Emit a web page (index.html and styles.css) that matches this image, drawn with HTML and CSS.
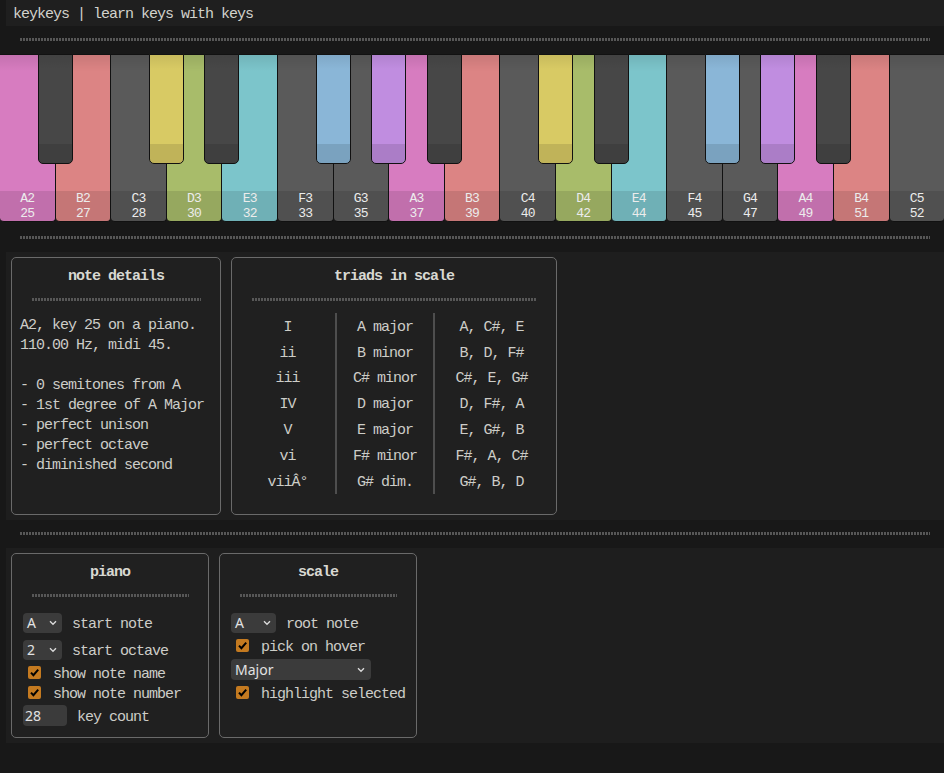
FILE: index.html
```html
<!DOCTYPE html>
<html lang="en">
<head>
<meta charset="utf-8">
<title>keykeys</title>
<link rel="stylesheet" href="styles.css">
</head>
<body>
<header class="titlebar">keykeys | learn keys with keys</header>
<div class="sep"><div class="dots"></div></div>

<div class="piano">
  <div class="wkey c-a"><div class="bkey c-dark"></div><div class="wlabel"><span>A2</span><span>25</span></div></div>
  <div class="wkey c-b"><div class="wlabel"><span>B2</span><span>27</span></div></div>
  <div class="wkey c-off"><div class="bkey c-cs"></div><div class="wlabel"><span>C3</span><span>28</span></div></div>
  <div class="wkey c-d"><div class="bkey c-dark"></div><div class="wlabel"><span>D3</span><span>30</span></div></div>
  <div class="wkey c-e"><div class="wlabel"><span>E3</span><span>32</span></div></div>
  <div class="wkey c-off"><div class="bkey c-fs"></div><div class="wlabel"><span>F3</span><span>33</span></div></div>
  <div class="wkey c-off"><div class="bkey c-gs"></div><div class="wlabel"><span>G3</span><span>35</span></div></div>
  <div class="wkey c-a"><div class="bkey c-dark"></div><div class="wlabel"><span>A3</span><span>37</span></div></div>
  <div class="wkey c-b"><div class="wlabel"><span>B3</span><span>39</span></div></div>
  <div class="wkey c-off"><div class="bkey c-cs"></div><div class="wlabel"><span>C4</span><span>40</span></div></div>
  <div class="wkey c-d"><div class="bkey c-dark"></div><div class="wlabel"><span>D4</span><span>42</span></div></div>
  <div class="wkey c-e"><div class="wlabel"><span>E4</span><span>44</span></div></div>
  <div class="wkey c-off"><div class="bkey c-fs"></div><div class="wlabel"><span>F4</span><span>45</span></div></div>
  <div class="wkey c-off"><div class="bkey c-gs"></div><div class="wlabel"><span>G4</span><span>47</span></div></div>
  <div class="wkey c-a"><div class="bkey c-dark"></div><div class="wlabel"><span>A4</span><span>49</span></div></div>
  <div class="wkey c-b"><div class="wlabel"><span>B4</span><span>51</span></div></div>
  <div class="wkey c-off"><div class="wlabel"><span>C5</span><span>52</span></div></div>
</div>

<div class="sep"><div class="dots"></div></div>

<section class="section">
  <div class="panel details">
    <div class="ptitle">note details</div>
    <div class="dots inner"></div>
    <div class="detail-text">A2, key 25 on a piano.<br>110.00 Hz, midi 45.<br><br>- 0 semitones from A<br>- 1st degree of A Major<br>- perfect unison<br>- perfect octave<br>- diminished second</div>
  </div>
  <div class="panel triads">
    <div class="ptitle">triads in scale</div>
    <div class="dots inner"></div>
    <table class="triad-table">
      <tr><td>I</td><td>A major</td><td>A, C#, E</td></tr>
      <tr><td>ii</td><td>B minor</td><td>B, D, F#</td></tr>
      <tr><td>iii</td><td>C# minor</td><td>C#, E, G#</td></tr>
      <tr><td>IV</td><td>D major</td><td>D, F#, A</td></tr>
      <tr><td>V</td><td>E major</td><td>E, G#, B</td></tr>
      <tr><td>vi</td><td>F# minor</td><td>F#, A, C#</td></tr>
      <tr><td>viiÂ°</td><td>G# dim.</td><td>G#, B, D</td></tr>
    </table>
  </div>
</section>

<div class="sep"><div class="dots"></div></div>

<section class="section">
  <div class="panel ctl">
    <div class="ptitle">piano</div>
    <div class="dots inner"></div>
    <div class="row tall">
      <span class="sel w-note">A<svg class="chev" width="8" height="6" viewBox="0 0 8 6"><polyline points="1,1.2 4,4.3 7,1.2" fill="none" stroke="#dcdcdc" stroke-width="1.3"/></svg></span>
      <span class="lbl">start note</span>
    </div>
    <div class="row tall gap3">
      <span class="sel w-note">2<svg class="chev" width="8" height="6" viewBox="0 0 8 6"><polyline points="1,1.2 4,4.3 7,1.2" fill="none" stroke="#dcdcdc" stroke-width="1.3"/></svg></span>
      <span class="lbl">start octave</span>
    </div>
    <div class="row">
      <span class="chk"><svg width="13" height="13" viewBox="0 0 13 13"><path d="M3 6.6 L5.4 9.2 L10.2 3.6" fill="none" stroke="#000" stroke-width="2"/></svg></span>
      <span class="lbl chk-lbl">show note name</span>
    </div>
    <div class="row nogap">
      <span class="chk"><svg width="13" height="13" viewBox="0 0 13 13"><path d="M3 6.6 L5.4 9.2 L10.2 3.6" fill="none" stroke="#000" stroke-width="2"/></svg></span>
      <span class="lbl chk-lbl">show note number</span>
    </div>
    <div class="row tall">
      <span class="num">28</span>
      <span class="lbl num-lbl">key count</span>
    </div>
  </div>
  <div class="panel ctl">
    <div class="ptitle">scale</div>
    <div class="dots inner"></div>
    <div class="row tall">
      <span class="sel w-root">A<svg class="chev" width="8" height="6" viewBox="0 0 8 6"><polyline points="1,1.2 4,4.3 7,1.2" fill="none" stroke="#dcdcdc" stroke-width="1.3"/></svg></span>
      <span class="lbl">root note</span>
    </div>
    <div class="row">
      <span class="chk"><svg width="13" height="13" viewBox="0 0 13 13"><path d="M3 6.6 L5.4 9.2 L10.2 3.6" fill="none" stroke="#000" stroke-width="2"/></svg></span>
      <span class="lbl chk-lbl">pick on hover</span>
    </div>
    <div class="row tall gap2">
      <span class="sel w-scale">Major<svg class="chev" width="8" height="6" viewBox="0 0 8 6"><polyline points="1,1.2 4,4.3 7,1.2" fill="none" stroke="#dcdcdc" stroke-width="1.3"/></svg></span>
    </div>
    <div class="row">
      <span class="chk"><svg width="13" height="13" viewBox="0 0 13 13"><path d="M3 6.6 L5.4 9.2 L10.2 3.6" fill="none" stroke="#000" stroke-width="2"/></svg></span>
      <span class="lbl chk-lbl">highlight selected</span>
    </div>
  </div>
</section>
</body>
</html>
```

FILE: styles.css
```css
* { box-sizing: border-box; }

body {
  margin: 0;
  background: #181818;
  color: #cdcdc8;
  font-family: "Liberation Mono", "DejaVu Sans Mono", monospace;
  font-size: 15px;
  letter-spacing: -1px;
}

.titlebar {
  margin-left: 6px;
  height: 26px;
  line-height: 22px;
  padding: 4px 0 0 7px;
  background: #1f1f1f;
  color: #d2d2cc;
}

.sep {
  padding: 12px 14px 13px 20px;
}

.dots {
  height: 3px;
  background: repeating-linear-gradient(90deg, #575757 0 2px, transparent 2px 3px);
}

.dots.inner {
  margin: 0 11px 14px 12px;
}

/* ---------- piano ---------- */
.piano {
  display: flex;
  height: 168px;
  margin-bottom: 2px;
}

.wkey {
  position: relative;
  flex: 1 1 0;
  display: flex;
  flex-direction: column;
  border-top: 1px solid #111;
  border-right: 1px solid #111;
  border-bottom: 1px solid #111;
  border-radius: 0 0 4px 4px;
  background-image: linear-gradient(rgba(0,0,0,0.09), rgba(0,0,0,0) 16px);
}

.wkey:last-child { border-right: none; }

.wlabel {
  margin-top: auto;
  height: 30px;
  display: flex;
  flex-direction: column;
  align-items: center;
  background: rgba(0,0,0,0.1);
  color: #ececec;
  font-size: 13px;
  line-height: 15px;
  letter-spacing: -0.8px;
}

.bkey {
  position: absolute;
  top: -1px;
  right: -18px;
  width: 35px;
  height: 110px;
  z-index: 2;
  border: 1px solid #111;
  border-radius: 0 0 5px 5px;
  background-image: linear-gradient(rgba(0,0,0,0.08), rgba(0,0,0,0) 14px);
  display: flex;
  flex-direction: column;
}

.bkey::after {
  content: "";
  margin-top: auto;
  height: 19px;
  border-radius: 0 0 4px 4px;
  background: rgba(0,0,0,0.11);
}

.c-a { background-color: #d77cc0; }
.c-b { background-color: #dc8484; }
.c-off { background-color: #5a5a5a; }
.c-d { background-color: #a8bc6a; }
.c-e { background-color: #7cc5cb; }
.c-cs { background-color: #d8ca64; }
.c-fs { background-color: #8ab6d7; }
.c-gs { background-color: #c08de0; }
.c-dark { background-color: #474747; }

/* ---------- panels ---------- */
.section {
  margin-left: 6px;
  background: #1e1e1e;
  padding: 5px;
  display: flex;
  gap: 10px;
  align-items: stretch;
}

.panel {
  border: 1px solid #6a6a6a;
  border-radius: 5px;
  background: #202020;
  padding: 8px 8px 20px;
}

.details { width: 210px; }
.triads { width: 326px; }
.ctl { width: 198px; padding-bottom: 9px; }

.ptitle {
  text-align: center;
  font-weight: bold;
  line-height: 19px;
  padding-top: 1px;
  margin-bottom: 12px;
  color: #d8d8d2;
}

.detail-text {
  line-height: 20px;
  padding-top: 1px;
  white-space: nowrap;
}

.triad-table {
  width: 100%;
  border-collapse: collapse;
  margin-top: -2px;
}

.triad-table td {
  height: 25.8px;
  padding: 3px 0 0;
  text-align: center;
  white-space: nowrap;
}

.triad-table td:nth-child(1) { width: 96px; }
.triad-table td:nth-child(2) { width: 98px; border-left: 2px solid #4e4e4e; }
.triad-table td:nth-child(3) { border-left: 2px solid #4e4e4e; }

/* ---------- controls ---------- */
.row {
  display: flex;
  align-items: center;
  height: 20px;
  margin-top: 1px;
}

.row.tall { height: 24px; }
.row.gap3 { margin-top: 3px; }
.row.gap2 { margin-top: 2px; }
.row.nogap { margin-top: 0; }

.ctl .dots.inner + .row { margin-top: 0; }

.sel, .num {
  display: flex;
  align-items: center;
  height: 20px;
  margin-left: 3px;
  padding: 0 5px 0 4px;
  background: #3b3b3b;
  border-radius: 4px;
  color: #e2e2e2;
  font-family: "Noto Sans", "Open Sans", sans-serif;
  font-size: 14px;
  letter-spacing: 0;
}

.sel .chev { margin-left: auto; }

.w-note { width: 39px; }
.w-root { width: 45px; }
.w-scale { width: 140px; height: 21px; padding-right: 6px; }

.num { width: 44px; height: 21px; padding-left: 2px; }

.lbl { margin-left: 10px; padding-top: 4px; white-space: nowrap; }
.chk-lbl { margin-left: 12px; }
.num-lbl { margin-left: 10px; }

.chk {
  display: block;
  width: 13px;
  height: 13px;
  margin-left: 8px;
  background: #c47a20;
  border-radius: 2px;
}

.chk svg { display: block; }
```
